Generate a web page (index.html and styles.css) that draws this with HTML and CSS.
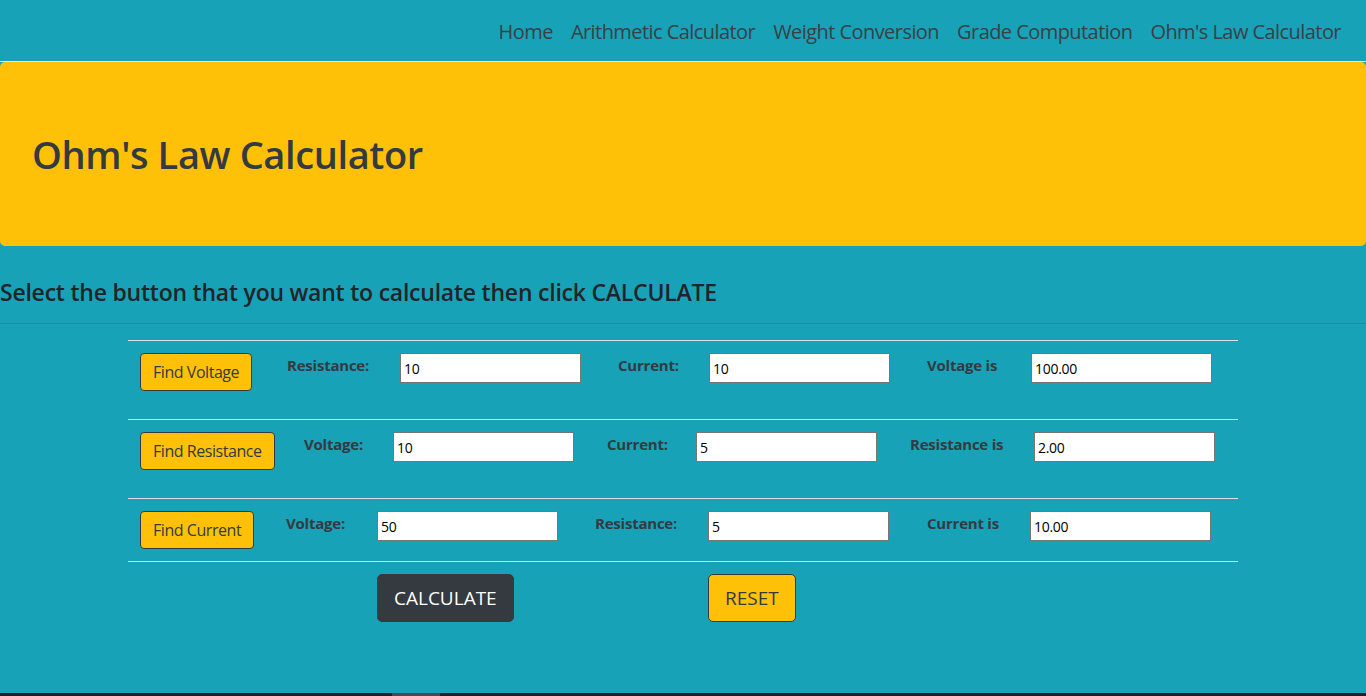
FILE: index.html
```html
<!DOCTYPE html>
<html lang="en">
<head>
<meta charset="utf-8">
<title>Ohm's Law Calculator</title>
<link rel="stylesheet" href="styles.css">
</head>
<body>
<div class="page">
  <nav class="navbar">
    <ul class="nav-links">
      <li><a href="#">Home</a></li>
      <li><a href="#">Arithmetic Calculator</a></li>
      <li><a href="#">Weight Conversion</a></li>
      <li><a href="#">Grade Computation</a></li>
      <li><a href="#">Ohm's Law Calculator</a></li>
    </ul>
  </nav>
  <header class="jumbotron">
    <h1>Ohm's Law Calculator</h1>
  </header>
  <h4 class="instructions">Select the button that you want to calculate then click CALCULATE</h4>
  <hr class="divider">
  <main class="container">
    <div class="row row-a tall">
      <div class="cell"><button class="btn btn-find">Find Voltage</button></div>
      <div class="cell"><span class="lbl">Resistance:</span></div>
      <div class="cell"><input class="field" type="text" value="10"></div>
      <div class="cell"><span class="lbl">Current:</span></div>
      <div class="cell"><input class="field" type="text" value="10"></div>
      <div class="cell"><span class="lbl">Voltage is</span></div>
      <div class="cell"><input class="field" type="text" value="100.00"></div>
    </div>
    <div class="row row-b tall">
      <div class="cell"><button class="btn btn-find">Find Resistance</button></div>
      <div class="cell"><span class="lbl">Voltage:</span></div>
      <div class="cell"><input class="field" type="text" value="10"></div>
      <div class="cell"><span class="lbl">Current:</span></div>
      <div class="cell"><input class="field" type="text" value="5"></div>
      <div class="cell"><span class="lbl">Resistance is</span></div>
      <div class="cell"><input class="field" type="text" value="2.00"></div>
    </div>
    <div class="row row-c">
      <div class="cell"><button class="btn btn-find">Find Current</button></div>
      <div class="cell"><span class="lbl">Voltage:</span></div>
      <div class="cell"><input class="field" type="text" value="50"></div>
      <div class="cell"><span class="lbl">Resistance:</span></div>
      <div class="cell"><input class="field" type="text" value="5"></div>
      <div class="cell"><span class="lbl">Current is</span></div>
      <div class="cell"><input class="field" type="text" value="10.00"></div>
    </div>
    <div class="row row-c">
      <div class="cell"></div>
      <div class="cell"></div>
      <div class="cell"><button class="btn btn-lg btn-dark">CALCULATE</button></div>
      <div class="cell"></div>
      <div class="cell"><button class="btn btn-lg btn-warn">RESET</button></div>
      <div class="cell"></div>
      <div class="cell"></div>
    </div>
  </main>
  <div class="bottom-bar"><span class="thumb"></span></div>
</div>
</body>
</html>
```

FILE: styles.css
```css
* { box-sizing: border-box; }
html, body { margin: 0; padding: 0; }
body {
  font-family: "Open Sans", "Noto Sans", sans-serif;
  background: #17a2b8;
  color: #212529;
  font-size: 16px;
  line-height: 1.5;
}
.page {
  min-height: 100vh;
  display: flex;
  flex-direction: column;
}
.navbar {
  height: 62px;
  border-bottom: 1px solid #d9eef2;
  display: flex;
  justify-content: flex-end;
  align-items: center;
  padding: 2px 25px 0 0;
}
.nav-links {
  list-style: none;
  margin: 0;
  padding: 0;
  display: flex;
  gap: 18px;
}
.nav-links a {
  color: #3a4046;
  text-decoration: none;
  font-size: 20px;
  letter-spacing: -0.028em;
  line-height: 30px;
}
.jumbotron {
  background: #ffc107;
  border-radius: 5px;
  padding: 64px 32px;
  height: 184px;
}
.jumbotron h1 {
  margin: 0;
  font-size: 38px;
  font-weight: 600;
  line-height: 56px;
  color: #343a40;
  letter-spacing: -0.01em;
}
.instructions {
  margin: 32px 0 0;
  font-size: 23px;
  font-weight: 600;
  line-height: 29px;
  color: #212529;
  letter-spacing: -0.01em;
}
.divider {
  margin: 16px 0 0;
  border: 0;
  border-top: 1px solid rgba(0,0,0,0.1);
}
.container {
  width: 1110px;
  margin: 16px auto 0;
  flex: 1;
}
.row {
  display: grid;
  border-top: 1px solid #dee2e6;
  height: 63px;
}
.row.tall { height: 79px; }
.row-a { grid-template-columns: 147px 113px 218px 91px 218px 104px 219px; }
.row-b { grid-template-columns: 164px 89px 214px 89px 214px 124px 216px; }
.row-c { grid-template-columns: 146px 91px 218px 113px 219px 103px 220px; }
.row:last-child { border-top: 1px solid #dee2e6; height: auto; }
.cell {
  padding: 12px;
}
.lbl {
  display: block;
  font-weight: 700;
  font-size: 15px;
  color: #343a40;
  line-height: 24px;
  white-space: nowrap;
  letter-spacing: -0.015em;
}
.field {
  width: 181px;
  height: 30px;
  border: 1px solid #767676;
  background: #fff;
  padding: 0 3px;
  font-family: "Open Sans", "Noto Sans", sans-serif;
  font-size: 14px;
  color: #000;
  letter-spacing: -0.02em;
}
.btn {
  font-family: "Open Sans", "Noto Sans", sans-serif;
  border: 1px solid #343a40;
  border-radius: 4px;
  white-space: nowrap;
  cursor: pointer;
}
.btn-find {
  background: #ffc107;
  color: #343a40;
  font-size: 16px;
  line-height: 24px;
  padding: 6px 12px;
  height: 38px;
  letter-spacing: -0.028em;
}
.btn-lg {
  font-size: 19px;
  line-height: 30px;
  padding: 8px 16px;
  height: 48px;
  border-radius: 5px;
}
.btn-dark {
  background: #343a40;
  border-color: #343a40;
  color: #fff;
}
.btn-warn {
  background: #ffc107;
  color: #343a40;
}
.bottom-bar {
  height: 3px;
  background: #1f1f1f;
  position: relative;
}
.thumb {
  position: absolute;
  left: 392px;
  top: 0;
  width: 48px;
  height: 3px;
  background: #4a4a4a;
}
```
